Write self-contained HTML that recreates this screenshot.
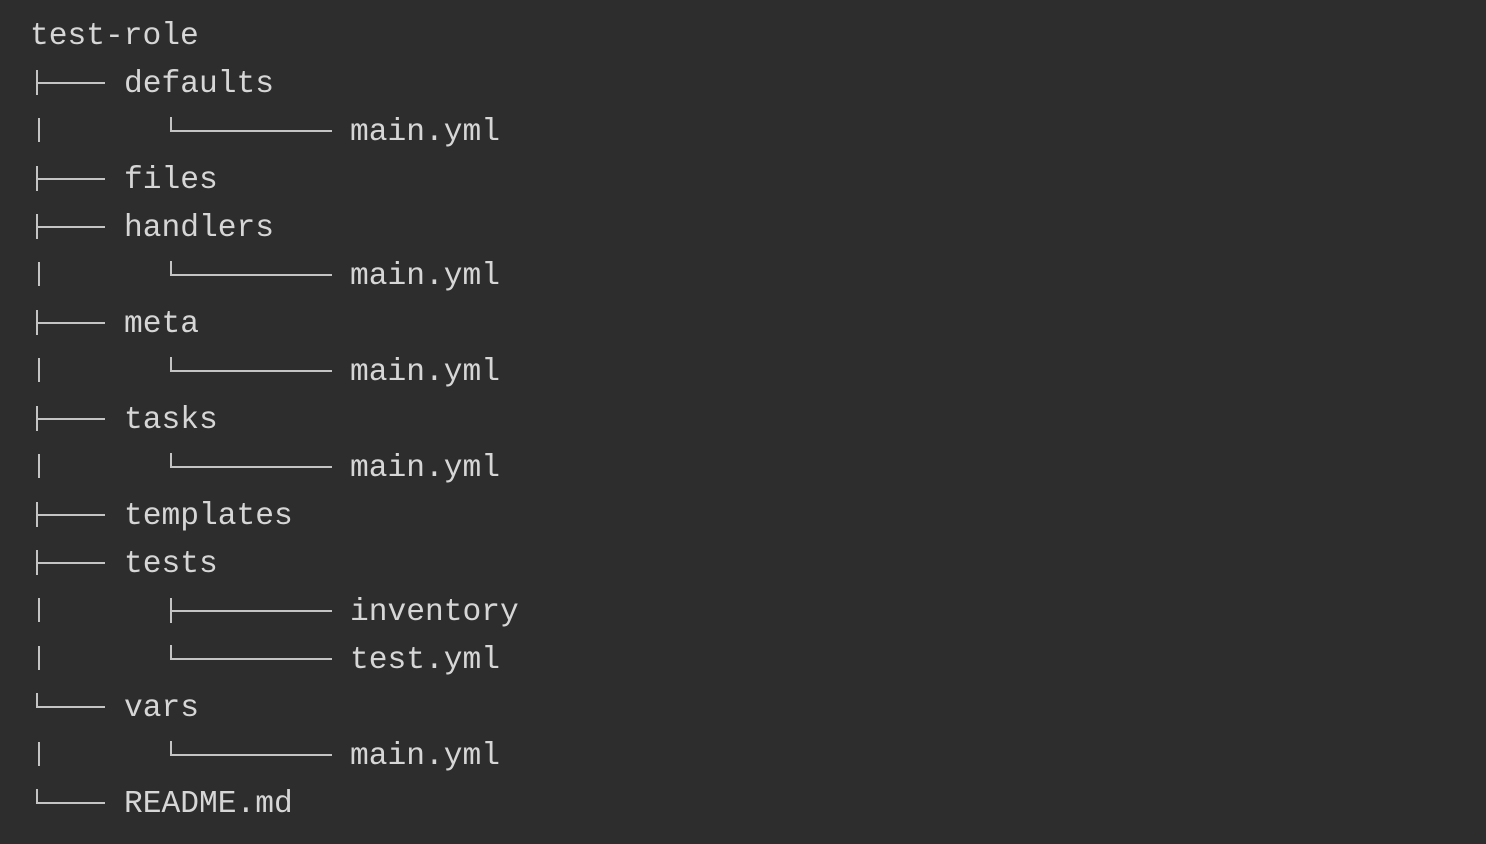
<!DOCTYPE html>
<html><head><style>
html,body{margin:0;padding:0;}
body{width:1486px;height:844px;background:#2d2d2d;position:relative;overflow:hidden;font-family:"Liberation Mono",monospace;font-size:31.25px;color:#d6d6d6;}
.t{position:absolute;line-height:48px;height:48px;white-space:pre;}
.l{position:absolute;background:#c4c4c4;}
</style></head><body>
<div id="c"></div>
<script>
var rows=[
[0,'','test-role'],
[1,'T','defaults'],
[2,'B','main.yml','L'],
[1,'T','files'],
[1,'T','handlers'],
[2,'B','main.yml','L'],
[1,'T','meta'],
[2,'B','main.yml','L'],
[1,'T','tasks'],
[2,'B','main.yml','L'],
[1,'T','templates'],
[1,'T','tests'],
[2,'B','inventory','T'],
[2,'B','test.yml','L'],
[1,'L','vars'],
[2,'B','main.yml','L'],
[1,'L','README.md']
];
var h='';
function ln(x,y,w,hh){h+='<div class="l" style="left:'+x+'px;top:'+y+'px;width:'+w+'px;height:'+hh+'px"></div>';}
function glyph(type,x,x2,c){
 if(type=='T'){ln(x,c-12,2,25);ln(x,c,x2-x,2);}
 else if(type=='L'){ln(x,c-13,2,14);ln(x,c,x2-x,2);}
}
rows.forEach(function(r,i){
 var c=34+48*i, top=13+48*i;
 var lvl=r[0];
 var left=lvl==0?30:(lvl==1?124:350);
 if(lvl==1){glyph(r[1],36,105,c);}
 if(lvl==2){ln(38,c-12,2,24);glyph(r[3],170,332,c);}
 h+='<div class="t" style="left:'+left+'px;top:'+top+'px">'+r[2]+'</div>';
});
document.getElementById('c').innerHTML=h;
</script>
</body></html>
